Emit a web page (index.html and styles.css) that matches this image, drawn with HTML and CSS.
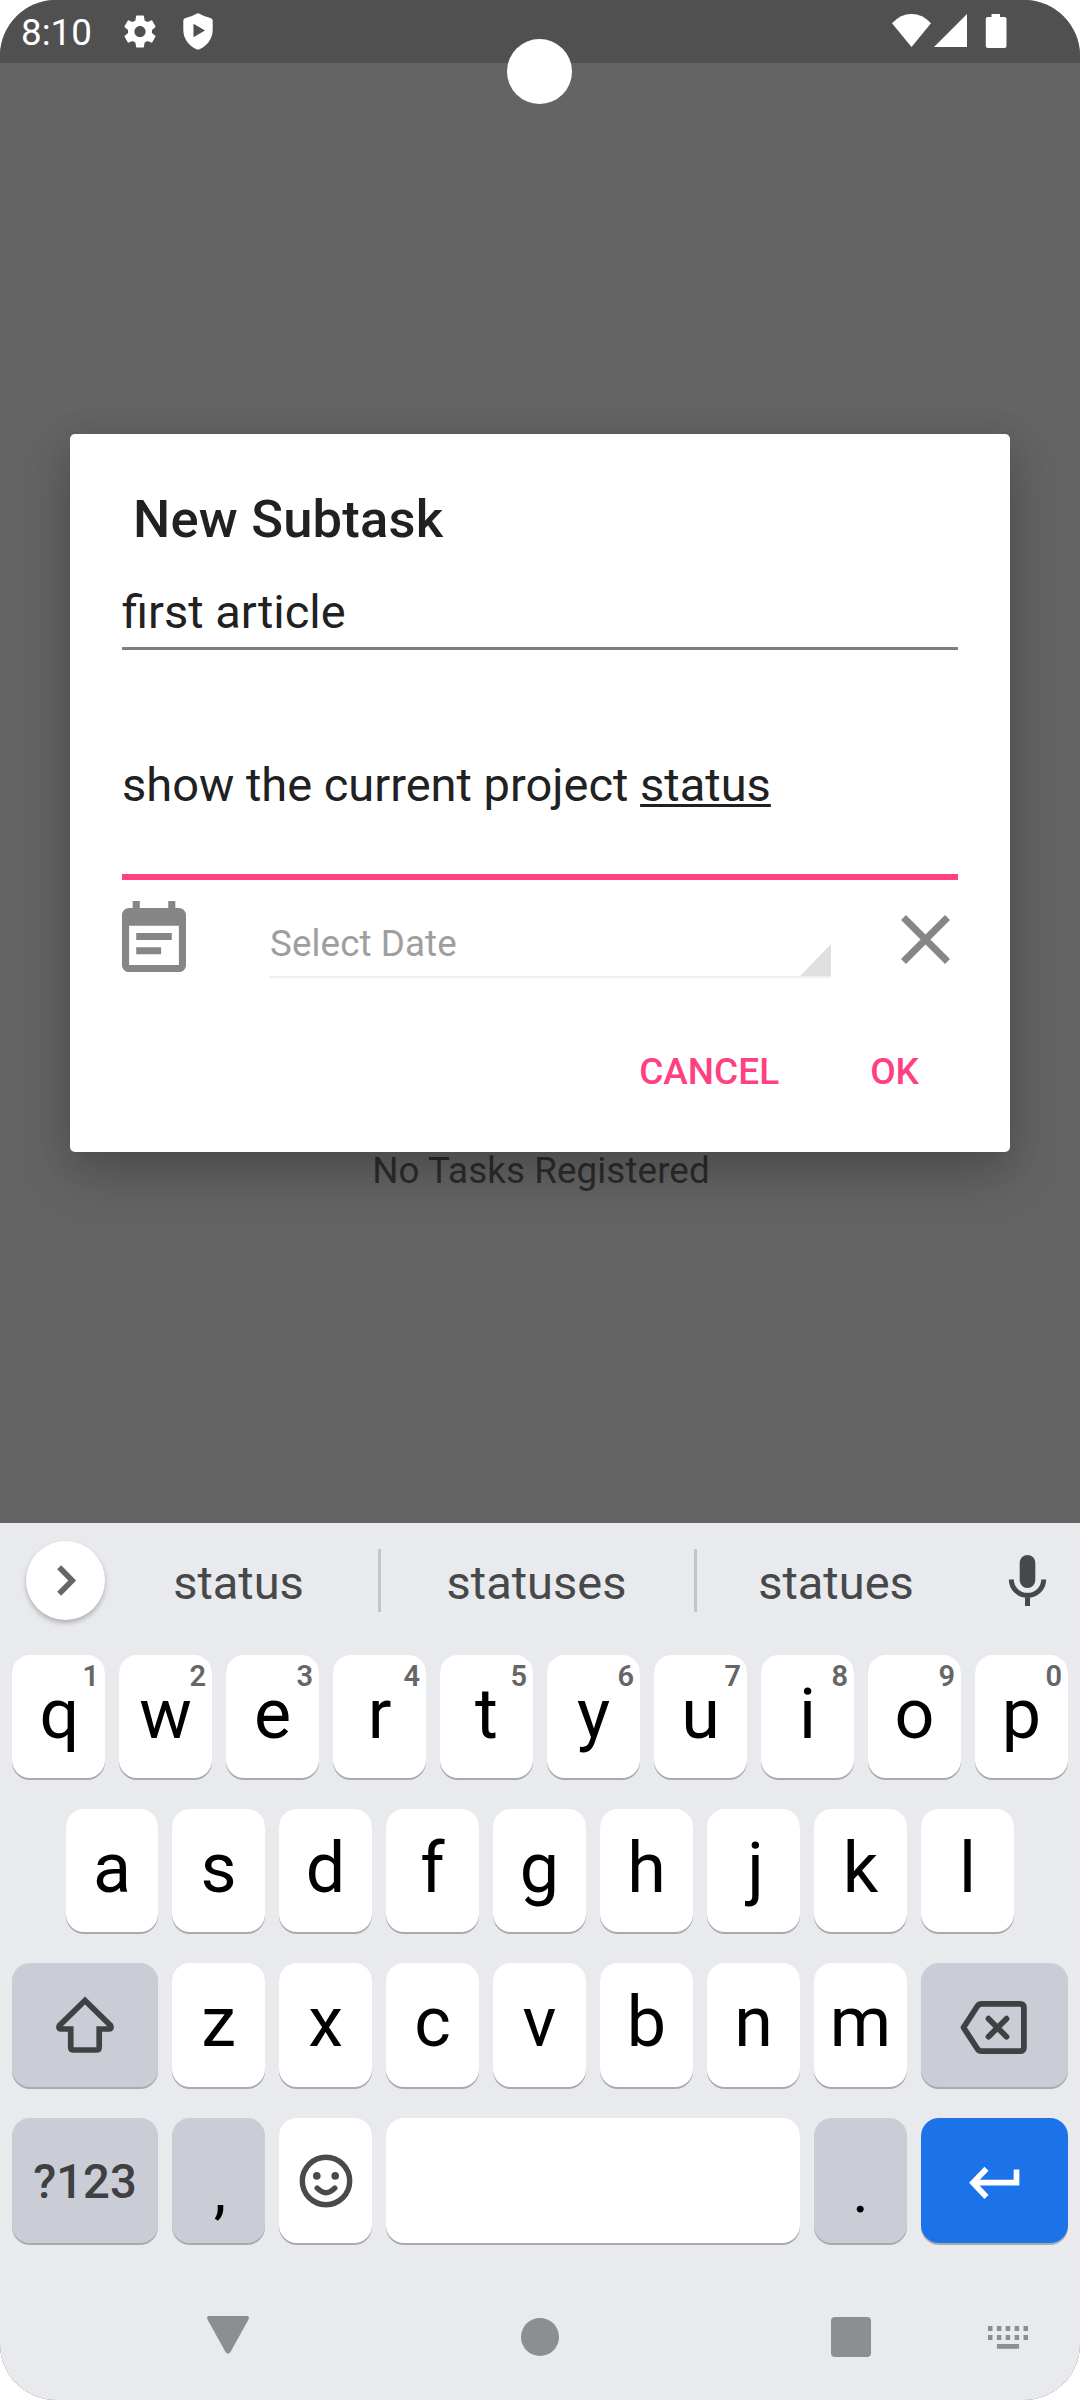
FILE: index.html
```html
<!DOCTYPE html>
<html lang="en">
<head>
<meta charset="utf-8">
<title>New Subtask</title>
<link rel="stylesheet" href="styles.css">
</head>
<body>
<div class="phone">
  <header class="status-bar">
    <span class="clock">8:10</span>
    <svg class="gear" viewBox="2 2 20 20"><path fill-rule="evenodd" d="M19.43 12.98c.04-.32.07-.64.07-.98s-.03-.66-.07-.98l2.11-1.65c.19-.15.24-.42.12-.64l-2-3.46c-.12-.22-.39-.3-.61-.22l-2.49 1c-.52-.4-1.08-.73-1.69-.98l-.38-2.65C14.46 2.18 14.25 2 14 2h-4c-.25 0-.46.18-.49.42l-.38 2.65c-.61.25-1.17.59-1.69.98l-2.49-1c-.23-.09-.49 0-.61.22l-2 3.46c-.13.22-.07.49.12.64l2.11 1.65c-.04.32-.07.65-.07.98s.03.66.07.98l-2.11 1.65c-.19.15-.24.42-.12.64l2 3.46c.12.22.39.3.61.22l2.49-1c.52.4 1.08.73 1.69.98l.38 2.65c.03.24.24.42.49.42h4c.25 0 .46-.18.49-.42l.38-2.65c.61-.25 1.17-.59 1.69-.98l2.49 1c.23.09.49 0 .61-.22l2-3.46c.12-.22.07-.49-.12-.64l-2.11-1.65zM12 15.5c-1.93 0-3.5-1.57-3.5-3.5s1.57-3.5 3.5-3.5 3.5 1.57 3.5 3.5-1.57 3.5-3.5 3.5z"/></svg>
    <svg class="shield" viewBox="0 0 30 37"><path fill-rule="evenodd" d="M15 .3Q16 .3 17 .9Q21.500 3.800 27.500 4.900Q29.700 5.400 29.700 7.500V17C29.700 26 23.500 33.500 16.500 36.300Q15 36.900 13.500 36.300C6.500 33.500.3 26 .3 17V7.500Q.3 5.400 2.500 4.900Q8.500 3.800 13 .9Q14 .3 15 .3ZM10.500 10.800V24.200L22 17.500Z"/></svg>
    <svg class="signals" viewBox="0 0 115 35">
      <path d="M0 9.300Q8.500 0 19.500 0T39 9.300L19.500 33Z"/>
      <path d="M75 0V33H42Z"/>
      <path d="M99.500 0H108V3H112.500Q114.500 3 114.500 5V32Q114.500 34 112.500 34H95.800Q93.800 34 93.800 32V5Q93.800 3 95.800 3H99.500Z"/>
    </svg>
  </header>
  <div class="camera"></div>

  <main class="stage">
    <p class="empty">No Tasks Registered</p>
    <section class="dialog">
      <h1 class="title">New Subtask</h1>
      <div class="field">first article</div>
      <div class="field field-focus">show the current project <span class="composing">status</span></div>
      <div class="date-row">
        <svg class="calendar" viewBox="3 1 18 20" preserveAspectRatio="none"><path d="M17 10H7v2h10v-2zm2-7h-1V1h-2v2H8V1H6v2H5c-1.110 0-2 .9-2 2v14c0 1.100.89 2 2 2h14c1.100 0 2-.9 2-2V5c0-1.100-.9-2-2-2zm0 16H5V8h14v11zm-5-5H7v2h7v-2z"/></svg>
        <div class="spinner"><span>Select Date</span><svg class="corner" viewBox="0 0 31 32"><path d="M31 0V32H0Z"/></svg></div>
        <svg class="clear" viewBox="0 0 49 49"><path d="M2.500 2.500L46.500 46.500M46.500 2.500L2.500 46.500"/></svg>
      </div>
      <div class="actions"><span>CANCEL</span><span>OK</span></div>
    </section>
  </main>

  <section class="keyboard">
    <div class="suggestions">
      <div class="expand"><svg viewBox="0 0 19 31"><path d="M2.200 2.200L15.200 15.500L2.200 28.800"/></svg></div>
      <span class="word w1">status</span>
      <i class="divider"></i>
      <span class="word w2">statuses</span>
      <i class="divider"></i>
      <span class="word w3">statues</span>
      <svg class="mic" viewBox="0 0 37 51"><rect x="10.700" y="0" width="15.600" height="33" rx="7.800"/><path class="line" d="M2.300 24.500A16.200 15.800 0 0 0 34.700 24.500M18.500 41V51"/></svg>
    </div>
    <div class="row r1">
      <div class="key">q<sup>1</sup></div><div class="key">w<sup>2</sup></div><div class="key">e<sup>3</sup></div><div class="key">r<sup>4</sup></div><div class="key">t<sup>5</sup></div><div class="key">y<sup>6</sup></div><div class="key">u<sup>7</sup></div><div class="key">i<sup>8</sup></div><div class="key">o<sup>9</sup></div><div class="key">p<sup>0</sup></div>
    </div>
    <div class="row r2">
      <div class="key">a</div><div class="key">s</div><div class="key">d</div><div class="key">f</div><div class="key">g</div><div class="key">h</div><div class="key j">j</div><div class="key">k</div><div class="key">l</div>
    </div>
    <div class="row r3">
      <div class="key wide dim"><svg class="shift" viewBox="0 0 60 58"><path d="M30 4.500L4.500 29.500Q3 32.800 6 33H15.700V51Q15.700 54 18.700 54H41.200Q44.200 54 44.200 51V33H54Q57 32.800 55.500 29.500Z"/></svg></div>
      <div class="key">z</div><div class="key">x</div><div class="key">c</div><div class="key">v</div><div class="key">b</div><div class="key">n</div><div class="key">m</div>
      <div class="key wide dim erase"><svg class="backspace" viewBox="0 0 67 53"><path d="M3.500 26.500L17.500 5Q19 2.900 21.500 2.900H60Q63.900 2.900 63.900 6.800V46.200Q63.900 50.100 60 50.100H21.500Q19 50.100 17.500 48ZM28.500 17.700L46.500 35.700M46.500 17.700L28.500 35.700"/></svg></div>
    </div>
    <div class="row r4">
      <div class="key wide dim mode">?123</div>
      <div class="key dim punct comma">,</div>
      <div class="key emoji"><svg class="smiley" viewBox="0 0 54 54"><circle cx="27" cy="27" r="23.700"/><path d="M18.200 34.200Q27 43 35.800 34.200"/><g><circle cx="17.800" cy="21.900" r="3.800"/><circle cx="36.200" cy="21.900" r="3.800"/></g></svg></div>
      <div class="key space"></div>
      <div class="key dim punct">.</div>
      <div class="key wide enter"><svg viewBox="0 0 51 32"><path d="M47.500 2.500V15.700H4M17.500 1.700L4 15.700L17.500 30"/></svg></div>
    </div>
    <nav class="nav">
      <svg class="back" viewBox="0 0 42 38"><path d="M2.500 0H39.500Q43 0 41.500 3.500L23.500 36Q21 39.500 18.500 36L.5 3.500Q-1 0 2.500 0Z"/></svg>
      <i class="home"></i>
      <i class="recent"></i>
      <svg class="ime" viewBox="0 0 40 23"><path d="M0 0h4.500v5H0zM8.900 0h4.500v5H8.900zM17.700 0h4.500v5H17.700zM26.600 0h4.500v5H26.600zM35.500 0H40v5H35.500zM0 9h4.500v5H0zM8.900 9h4.500v5H8.900zM17.700 9h4.500v5H17.700zM26.600 9h4.500v5H26.600zM35.500 9H40v5H35.500zM8.900 18H31.100v4.700H8.900z"/></svg>
    </nav>
  </section>
</div>
</body>
</html>
```
FILE: styles.css
```css
* { box-sizing: border-box; }
body { margin: 0; background: #fff; font-family: Roboto, sans-serif; }
svg { display: block; flex: none; overflow: visible; }

.phone {
  position: relative;
  width: 1080px;
  height: 2400px;
  border-radius: 56px;
  overflow: hidden;
  background: #646464;
  display: flex;
  flex-direction: column;
}

.status-bar {
  height: 63px;
  background: #505050;
  display: flex;
  align-items: flex-start;
  padding-left: 21px;
  color: #fff;
  fill: #fff;
}
.clock { width: 103px; font-size: 36.75px; line-height: 44px; padding-top: 11px; }
.gear { width: 32px; height: 33px; margin-top: 15px; }
.shield { width: 30px; height: 37px; margin: 13px 0 0 27px; }
.signals { width: 115px; height: 35px; margin: 14px 73px 0 auto; }
.camera {
  position: absolute;
  left: 507px;
  top: 39px;
  width: 65px;
  height: 65px;
  border-radius: 50%;
  background: #fff;
  z-index: 2;
}

.stage { position: relative; height: 1460px; }
.empty {
  margin: 0;
  padding: 1086px 0 0 2px;
  text-align: center;
  font-size: 36.75px;
  line-height: 44px;
  letter-spacing: .1px;
  color: #2c2c2c;
}

.dialog {
  position: absolute;
  left: 70px;
  top: 371px;
  width: 940px;
  height: 718px;
  padding: 54px 52px 0;
  border-radius: 5px;
  background: #fff;
  color: #212121;
  box-shadow: 0 24px 54px rgba(0, 0, 0, .2), 0 4px 36px rgba(0, 0, 0, .1);
}
.title { margin: 0 0 34px; padding-left: 11px; font-size: 52.5px; line-height: 62px; font-weight: 500; letter-spacing: .2px; }
.field { font-size: 47px; line-height: 56px; padding-bottom: 7px; border-bottom: 3px solid #7f7f7f; }
.field-focus { margin-top: 107px; padding-bottom: 61px; border-bottom: 6px solid #ff4081; }
.composing { text-decoration: underline; text-decoration-thickness: 2.500px; text-underline-offset: 3px; text-decoration-skip-ink: none; }
.date-row { display: flex; align-items: flex-start; padding-top: 21px; }
.calendar { width: 64px; height: 71px; fill: #868686; }
.spinner {
  width: 562px;
  height: 77px;
  margin-left: 83px;
  border-bottom: 2px solid #efefef;
  display: flex;
  justify-content: space-between;
  align-items: flex-end;
  font-size: 36.75px;
  line-height: 44px;
  color: #9e9e9e;
}
.spinner span { padding: 0 0 10px 1px; letter-spacing: .1px; }
.corner { width: 31px; height: 32px; fill: #e0e0e0; }
.clear { width: 49px; height: 49px; margin: 14px 0 0 70px; stroke: #868686; stroke-width: 7; }
.actions {
  display: flex;
  justify-content: flex-end;
  gap: 91px;
  padding: 72px 39px 0 0;
  font-size: 37px;
  line-height: 44px;
  font-weight: 500;
  color: #ff4081;
}

.keyboard { height: 877px; background: #e8eaee; }
.suggestions { height: 132px; display: flex; align-items: flex-start; padding: 18px 34px 0 26px; color: #474849; }
.expand {
  width: 79px;
  height: 79px;
  border-radius: 50%;
  background: #fff;
  box-shadow: 0 3px 5px rgba(0, 0, 0, .25);
  display: flex;
  align-items: center;
  padding-left: 31px;
  flex: none;
}
.expand svg { width: 19px; height: 31px; fill: none; stroke: #666; stroke-width: 5.600; }
.word { font-size: 47px; line-height: 56px; padding-top: 14px; text-align: center; flex: none; }
.w1 { width: 267px; margin-right: 6px; }
.w2 { width: 313px; padding-right: 2px; }
.w3 { width: 278px; }
.divider { width: 3px; height: 63px; margin-top: 8px; background: #c3c4c8; flex: none; }
.mic { width: 37px; height: 51px; margin: 14px 0 0 34px; fill: #474849; }
.mic .line { fill: none; stroke: #474849; stroke-width: 5; }

.row { display: flex; justify-content: center; gap: 14px; padding: 0 12px; margin-bottom: 31px; }
.key {
  position: relative;
  width: 93px;
  height: 123px;
  border-radius: 18px;
  background: #fff;
  box-shadow: 0 2px 0 #a9aaad;
  display: flex;
  align-items: center;
  justify-content: center;
  font-size: 70px;
  line-height: 118px;
  padding-bottom: 6px;
  color: #000;
  flex: none;
}
.key sup { position: absolute; right: 6px; top: 9px; font-size: 29px; line-height: 24px; font-weight: 600; color: #666; }
.r1 .key:first-child { padding-left: 2px; }
.r2 .key:first-child { width: 92px; }
.r2 .j { padding-left: 4px; }
.wide { width: 147px; }
.r3 .wide:first-child, .r4 .wide:first-child { width: 146px; }
.dim { background: #cbcdd6; }
.r3 .key { height: 124px; }
.r4 { margin-bottom: 0; }
.r4 .key { height: 125px; }
.r4 .space { width: 414px; }
.r4 .mode { font-size: 47.25px; font-weight: 500; color: #3f4042; padding-bottom: 0; padding-top: 2px; }
.r4 .punct { font-size: 63px; padding: 20px 0 0; }
.r4 .comma { padding-left: 3px; }
.r4 .emoji { padding-bottom: 0; }
.r4 .enter { background: #1c73e9; padding: 5px 1px 0 0; }
.shift { width: 60px; height: 58px; fill: none; stroke: #404143; stroke-width: 5.700; }
.backspace { width: 67px; height: 53px; fill: none; stroke: #404143; stroke-width: 5.800; stroke-linecap: round; stroke-linejoin: round; }
.r3 .wide { padding-bottom: 0; }
.r3 .erase { padding: 5px 2px 0 0; }
.smiley { width: 54px; height: 54px; fill: none; stroke: #4a4a4a; stroke-width: 5.400; stroke-linecap: round; }
.smiley g { fill: #4a4a4a; stroke: none; }
.enter svg { width: 51px; height: 32px; fill: none; stroke: #fff; stroke-width: 5.700; }

.nav { display: flex; align-items: flex-start; padding: 73px 0 0 207px; fill: #8d8e90; }
.back { width: 42px; height: 38px; }
.home { width: 38px; height: 38px; margin: 2px 0 0 272px; border-radius: 50%; background: #8d8e90; }
.recent { width: 40px; height: 40px; margin: 1px 0 0 272px; border-radius: 4px; background: #8d8e90; }
.ime { width: 40px; height: 23px; margin: 10px 0 0 117px; }
```
